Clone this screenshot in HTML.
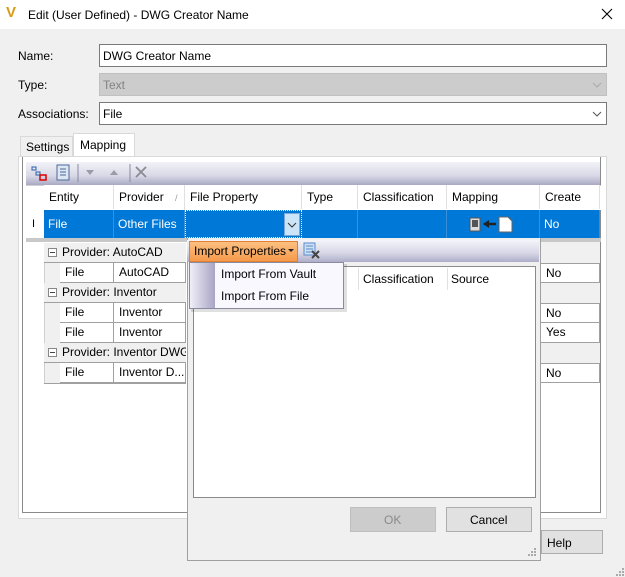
<!DOCTYPE html>
<html><head><style>
*{box-sizing:border-box;margin:0;padding:0}
body{width:625px;height:577px;background:#f0f0f0;font-family:"Liberation Sans",sans-serif;font-size:12px;color:#000;position:relative;overflow:hidden}
.a{position:absolute}
.t{position:absolute;white-space:nowrap;line-height:14px}
.inp{position:absolute;border:1px solid #7a7a7a;background:#fff}
.cell{position:absolute;border-right:1px solid #a0a0a0;border-bottom:1px solid #a0a0a0;background:#fff;padding-left:5px;line-height:19px;white-space:nowrap;overflow:hidden}
.hd{position:absolute;border-right:1px solid #e0e0e0;background:#fff;padding-left:5px;line-height:24px;white-space:nowrap}
.sel{position:absolute;background:#0078d7;color:#fff;line-height:28px;padding-left:4px;border-right:1px solid #3a8fd9;white-space:nowrap}
.grp{position:absolute;left:44px;width:142px;height:20px;background:#f0f0f0;border-bottom:1px solid #a0a0a0;line-height:18px;white-space:nowrap;overflow:hidden}
.box{display:inline-block;width:9px;height:9px;border:1px solid #888;position:relative;top:1px;margin:0 5px 0 4px;background:#fff}
.box:after{content:"";position:absolute;left:1px;top:3px;width:5px;height:1px;background:#444}
</style></head><body>
<div class="a" style="left:0;top:0;width:625px;height:29px;background:#fff"></div>
<div class="t" style="left:6px;top:6px;font-weight:bold;color:#d89a1a;font-size:15px">V</div>
<div class="t" style="left:28px;top:8px;font-size:12px">Edit (User Defined) - DWG Creator Name</div>
<svg class="a" style="left:601px;top:8px" width="12" height="12"><path d="M1 1L11 11M11 1L1 11" stroke="#000" stroke-width="1.1"/></svg>

<div class="t" style="left:18px;top:49px">Name:</div>
<div class="inp" style="left:99px;top:44px;width:508px;height:23px"><span class="t" style="left:3px;top:4px">DWG Creator Name</span></div>
<div class="t" style="left:18px;top:78px">Type:</div>
<div class="inp" style="left:99px;top:73px;width:508px;height:23px;background:#cccccc;border-color:#c0c0c0"><span class="t" style="left:3px;top:4px;color:#838383">Text</span><svg class="a" style="left:492px;top:8px" width="10" height="6"><path d="M1 1L5 5L9 1" stroke="#aaa" fill="none"/></svg></div>
<div class="t" style="left:18px;top:107px">Associations:</div>
<div class="inp" style="left:99px;top:102px;width:508px;height:23px"><span class="t" style="left:3px;top:4px">File</span><svg class="a" style="left:492px;top:8px" width="10" height="6"><path d="M1 1L5 5L9 1" stroke="#555" fill="none"/></svg></div>

<div class="a" style="left:20px;top:136px;width:53px;height:20px;border:1px solid #d9d9d9;border-bottom:none;background:#f0f0f0"></div>
<div class="t" style="left:26px;top:140px">Settings</div>
<div class="a" style="left:73px;top:133px;width:62px;height:24px;border:1px solid #d9d9d9;border-bottom:none;background:#fff"></div>
<div class="t" style="left:80px;top:138px">Mapping</div>
<div class="a" style="left:18px;top:156px;width:589px;height:363px;border:1px solid #d9d9d9;border-top:none;background:#fff"></div>
<div class="a" style="left:22px;top:156px;width:579px;height:357px;border:1px solid #8a8a8a;border-top:none;background:#fff"></div>
<div class="a" style="left:18px;top:156px;width:117px;height:1px;background:#d9d9d9"></div>
<div class="a" style="left:135px;top:156px;width:472px;height:1px;background:#d9d9d9"></div>

<div class="a" style="left:26px;top:161px;width:574px;height:24px;background:linear-gradient(#f2f2f8,#d8d8e6 60%,#a9a9c4);border-top:1px solid #fff"></div>
<svg class="a" style="left:30px;top:164px" width="120" height="18">
<rect x="2" y="3" width="4" height="3" fill="none" stroke="#2a5ea8"/><rect x="6" y="8" width="4" height="3" fill="none" stroke="#2a5ea8"/><rect x="10" y="11" width="6" height="5" fill="none" stroke="#d00" stroke-width="1.5"/>
<rect x="27" y="1" width="12" height="15" fill="#dde7f3" stroke="#4a6a9a"/><path d="M30 5h6M30 8h6M30 11h6" stroke="#4a6a9a"/>
<path d="M48 0v18" stroke="#8888a0"/>
<path d="M56 6h8l-4 5z" fill="#9a9aa8"/><path d="M80 11h8l-4-5z" fill="#9a9aa8"/>
<path d="M100 0v18" stroke="#8888a0"/>
<path d="M106 3l10 10M116 3l-10 10" stroke="#8a8a94" stroke-width="1.8"/>
</svg>

<div class="a" style="left:26px;top:185px;width:575px;height:25px;background:#fff;border-top:1px solid #d0d0d0"></div>
<div class="hd" style="left:44px;top:185px;width:70px">Entity</div>
<div class="hd" style="left:114px;top:185px;width:71px">Provider <span style="color:#999;font-size:9px;margin-left:8px">/</span></div>
<div class="hd" style="left:185px;top:185px;width:117px">File Property</div>
<div class="hd" style="left:302px;top:185px;width:56px">Type</div>
<div class="hd" style="left:358px;top:185px;width:89px">Classification</div>
<div class="hd" style="left:447px;top:185px;width:93px">Mapping</div>
<div class="hd" style="left:540px;top:185px;width:60px">Create</div>
<div class="a" style="left:26px;top:210px;width:18px;height:28px;background:#fff"></div>
<div class="t" style="left:32px;top:217px;font-size:11px">I</div>
<div class="sel" style="left:44px;top:210px;width:70px;height:28px">File</div>
<div class="sel" style="left:114px;top:210px;width:71px;height:28px">Other Files</div>
<div class="sel" style="left:185px;top:210px;width:117px;height:28px;border:1px dotted #fff"></div>
<div class="a" style="left:284px;top:213px;width:16px;height:23px;background:#cce4f7;border:1px solid #7aa7d6"></div>
<svg class="a" style="left:287px;top:222px" width="10" height="6"><path d="M1 1L5 5L9 1" stroke="#333" fill="none"/></svg>
<div class="sel" style="left:302px;top:210px;width:56px;height:28px"></div>
<div class="sel" style="left:358px;top:210px;width:89px;height:28px"></div>
<div class="sel" style="left:447px;top:210px;width:93px;height:28px"></div>
<div class="sel" style="left:540px;top:210px;width:60px;height:28px">No</div>
<svg class="a" style="left:469px;top:216px" width="50" height="17">
<rect x="1" y="2" width="10" height="13" fill="#ddd" stroke="#555"/><rect x="3" y="4" width="6" height="7" fill="#555"/>
<path d="M15 8h12" stroke="#222" stroke-width="2.5"/><path d="M14 8l6-4v8z" fill="#222"/>
<path d="M30 1h9l4 4v11h-13z" fill="#fff" stroke="#666"/>
</svg>
<div class="a" style="left:26px;top:238px;width:575px;height:4px;background:#c8c8c8"></div>

<div class="a" style="left:44px;top:243px;width:16px;height:141px;background:#f0f0f0;border-left:1px solid #d0d0d0"></div>
<div class="grp" style="top:243px"><span class="box"></span>Provider: AutoCAD</div>
<div class="cell" style="left:60px;top:263px;width:54px;height:20px">File</div>
<div class="cell" style="left:114px;top:263px;width:72px;height:20px">AutoCAD</div>
<div class="grp" style="top:283px"><span class="box"></span>Provider: Inventor</div>
<div class="cell" style="left:60px;top:303px;width:54px;height:20px">File</div>
<div class="cell" style="left:114px;top:303px;width:72px;height:20px">Inventor</div>
<div class="cell" style="left:60px;top:323px;width:54px;height:20px">File</div>
<div class="cell" style="left:114px;top:323px;width:72px;height:20px">Inventor</div>
<div class="grp" style="top:343px"><span class="box"></span>Provider: Inventor DWG</div>
<div class="cell" style="left:60px;top:363px;width:54px;height:20px">File</div>
<div class="cell" style="left:114px;top:363px;width:72px;height:20px">Inventor D...</div>
<div class="a" style="left:44px;top:383px;width:142px;height:1px;background:#a0a0a0"></div>
<div class="a" style="left:540px;top:242px;width:60px;height:21px;background:#f0f0f0"></div>
<div class="cell" style="left:540px;top:263px;width:60px;height:20px;border-left:1px solid #a0a0a0;border-top:1px solid #a0a0a0">No</div>
<div class="a" style="left:540px;top:283px;width:60px;height:20px;background:#f0f0f0"></div>
<div class="cell" style="left:540px;top:303px;width:60px;height:20px;border-left:1px solid #a0a0a0;border-top:1px solid #a0a0a0">No</div>
<div class="cell" style="left:540px;top:323px;width:60px;height:20px;border-left:1px solid #a0a0a0">Yes</div>
<div class="a" style="left:540px;top:343px;width:60px;height:20px;background:#f0f0f0"></div>
<div class="cell" style="left:540px;top:363px;width:60px;height:20px;border-left:1px solid #a0a0a0;border-top:1px solid #a0a0a0">No</div>

<div class="a" style="left:541px;top:530px;width:62px;height:24px;background:#e1e1e1;border:1px solid #adadad"></div>
<div class="t" style="left:547px;top:536px">Help</div>

<div class="a" style="left:187px;top:238px;width:354px;height:323px;background:#f0f0f0;border:1px solid #a0a0a0;border-top:none"></div>
<div class="a" style="left:187px;top:240px;width:352px;height:22px;background:linear-gradient(#f4f4fa,#d6d6e6 60%,#aeaec8)"></div>
<div class="a" style="left:189px;top:241px;width:109px;height:21px;background:linear-gradient(#fcc080,#f59a4c);border:1px solid #e08030"></div>
<div class="t" style="left:194px;top:244px">Import Properties</div>
<svg class="a" style="left:288px;top:249px" width="6" height="4"><path d="M0 0h6L3 3z" fill="#222"/></svg>
<svg class="a" style="left:303px;top:242px" width="18" height="18"><rect x="1" y="1" width="11" height="12" fill="#cfe0f4" stroke="#5a8ac8"/><path d="M3 4h7M3 7h7M3 10h7" stroke="#5a8ac8"/><path d="M9 9l7 7M16 9l-7 7" stroke="#444" stroke-width="2"/></svg>
<div class="a" style="left:193px;top:266px;width:343px;height:232px;background:#fff;border:1px solid #8a8a8a"></div>
<div class="a" style="left:358px;top:268px;width:1px;height:22px;background:#e0e0e0"></div>
<div class="a" style="left:447px;top:268px;width:1px;height:22px;background:#e0e0e0"></div>
<div class="t" style="left:363px;top:272px">Classification</div>
<div class="t" style="left:451px;top:272px">Source</div>
<div class="a" style="left:350px;top:507px;width:86px;height:25px;background:#cccccc;border:1px solid #bfbfbf"></div>
<div class="t" style="left:384px;top:513px;color:#8a8a8a">OK</div>
<div class="a" style="left:446px;top:507px;width:86px;height:25px;background:#e1e1e1;border:1px solid #adadad"></div>
<div class="t" style="left:470px;top:513px">Cancel</div>
<svg class="a" style="left:527px;top:547px" width="10" height="10"><g fill="#aaa"><rect x="7" y="1" width="2" height="2"/><rect x="4" y="4" width="2" height="2"/><rect x="7" y="4" width="2" height="2"/><rect x="1" y="7" width="2" height="2"/><rect x="4" y="7" width="2" height="2"/><rect x="7" y="7" width="2" height="2"/></g></svg>
<svg class="a" style="left:615px;top:567px" width="10" height="10"><g fill="#aaa"><rect x="7" y="1" width="2" height="2"/><rect x="4" y="4" width="2" height="2"/><rect x="7" y="4" width="2" height="2"/><rect x="1" y="7" width="2" height="2"/><rect x="4" y="7" width="2" height="2"/><rect x="7" y="7" width="2" height="2"/></g></svg>

<div class="a" style="left:191px;top:264px;width:156px;height:48px;background:rgba(0,0,0,0.12)"></div>
<div class="a" style="left:189px;top:262px;width:155px;height:47px;background:#faf8ff;border:1px solid #8a8aa0"></div>
<div class="a" style="left:190px;top:263px;width:25px;height:45px;background:linear-gradient(90deg,#f0eef8,#a8a4c4)"></div>
<div class="t" style="left:221px;top:267px">Import From Vault</div>
<div class="t" style="left:221px;top:289px">Import From File</div>
</body></html>
